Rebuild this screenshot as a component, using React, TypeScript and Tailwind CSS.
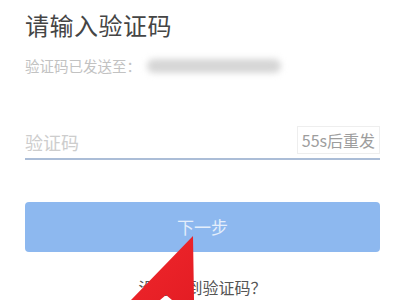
export default function App() {
  return (
    <div className="relative w-[400px] h-[300px] overflow-hidden bg-white font-['Noto_Sans_CJK_SC',sans-serif]">
      <div className="flex flex-col pl-[25px] pr-[20px] pt-[9px]">
        {/* Title */}
        <h1 className="text-[24px] leading-[32px] text-[#454545] tracking-[0.5px]">请输入验证码</h1>

        {/* Sent-to line */}
        <div className="mt-[15px] flex items-center h-[20px]">
          <span className="text-[14.5px] leading-[20px] text-[#c2c2c2]">验证码已发送至：</span>
          <div className="ml-[6px] w-[134px] h-[14px] rounded-full bg-[#d6d6d6] blur-[3px]" />
        </div>

        {/* Code input */}
        <div className="mt-[50px] flex items-center justify-between h-[32px] border-b-2 border-[#abbdd7] box-content">
          <span className="text-[18px] leading-[24px] text-[#cdcdcd]">验证码</span>
          <span className="flex items-center h-[28px] -mt-[4px] px-[4px] border border-[#eeeeee] text-[16px] leading-[20px] text-[#9d9d9d]">
            55s后重发
          </span>
        </div>

        {/* Next button */}
        <button className="mt-[42px] h-[50px] w-full rounded-[4px] bg-[#8db8ef] text-[17px] text-[#e4eefb]">
          下一步
        </button>

        {/* Help link */}
        <div className="mt-[24px] text-center text-[16px] leading-[22px] text-[#555555]">没有收到验证码？</div>
      </div>

      {/* Red annotation arrow */}
      <svg className="absolute left-0 top-0" width="400" height="300" viewBox="0 0 400 300">
        <defs>
          <linearGradient id="redArrow" x1="0" y1="0" x2="1" y2="1">
            <stop offset="0" stopColor="#f0272c" />
            <stop offset="1" stopColor="#e41d24" />
          </linearGradient>
        </defs>
        <polygon points="193,236 131,300 160,300 166,295 172,300 194,300" fill="url(#redArrow)" />
      </svg>
    </div>
  );
}
